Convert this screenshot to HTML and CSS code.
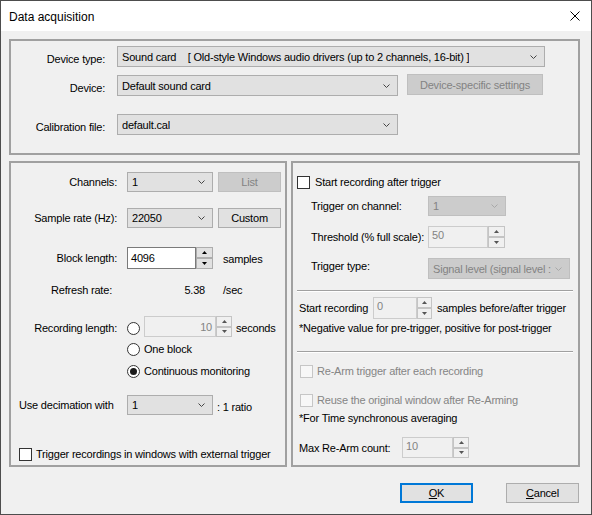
FILE: index.html
```html
<!DOCTYPE html>
<html>
<head>
<meta charset="utf-8">
<link rel="stylesheet" href="styles.css">
</head>
<body>
<div class="win">
  <div class="titlebar">
    <span class="title">Data acquisition</span>
    <svg class="close" width="10" height="10" viewBox="0 0 10 10"><path d="M0.5 0.5 L9.5 9.5 M9.5 0.5 L0.5 9.5" stroke="#000" stroke-width="1" fill="none"/></svg>
  </div>
  <div class="content">
    <div class="group top">
      <div class="trow">
        <span class="tlbl shift">Device type:</span>
        <div class="combo w428"><span class="pre">Sound card    [ Old-style Windows audio drivers (up to 2 channels, 16-bit) ]</span><svg class="chev" width="7" height="4" viewBox="0 0 7 4"><polyline points="0.5,0.5 3.5,3.5 6.5,0.5" fill="none" stroke="#444" stroke-width="1"/></svg></div>
      </div>
      <div class="trow r2">
        <span class="tlbl shift">Device:</span>
        <div class="combo w281"><span>Default sound card</span><svg class="chev" width="7" height="4" viewBox="0 0 7 4"><polyline points="0.5,0.5 3.5,3.5 6.5,0.5" fill="none" stroke="#444" stroke-width="1"/></svg></div>
        <div class="btn dis devbtn">Device-specific settings</div>
      </div>
      <div class="trow r3">
        <span class="tlbl shift">Calibration file:</span>
        <div class="combo w281"><span>default.cal</span><svg class="chev" width="7" height="4" viewBox="0 0 7 4"><polyline points="0.5,0.5 3.5,3.5 6.5,0.5" fill="none" stroke="#444" stroke-width="1"/></svg></div>
      </div>
    </div>

    <div class="lower">
      <div class="group left">
        <div class="lrow ra">
          <span class="llbl">Channels:</span>
          <div class="combo w86"><span>1</span><svg class="chev" width="7" height="4" viewBox="0 0 7 4"><polyline points="0.5,0.5 3.5,3.5 6.5,0.5" fill="none" stroke="#444" stroke-width="1"/></svg></div>
          <div class="btn dis sbtn">List</div>
        </div>
        <div class="lrow rb">
          <span class="llbl">Sample rate (Hz):</span>
          <div class="combo w86"><span>22050</span><svg class="chev" width="7" height="4" viewBox="0 0 7 4"><polyline points="0.5,0.5 3.5,3.5 6.5,0.5" fill="none" stroke="#444" stroke-width="1"/></svg></div>
          <div class="btn sbtn">Custom</div>
        </div>
        <div class="lrow rc">
          <span class="llbl">Block length:</span>
          <div class="edit w69">4096</div>
          <div class="spin w17"><div class="sb"><svg width="5" height="3" viewBox="0 0 5 3"><polygon points="0,3 2.5,0 5,3" fill="#000"/></svg></div><div class="sb"><svg width="5" height="3" viewBox="0 0 5 3"><polygon points="0,0 2.5,3 5,0" fill="#000"/></svg></div></div>
          <span class="after10 low">samples</span>
        </div>
        <div class="lrow rd">
          <span class="llbl refresh">Refresh rate:</span>
          <span class="val">5.38</span>
          <span class="after18">/sec</span>
        </div>
        <div class="lrow re">
          <span class="llbl low2">Recording length:</span>
          <span class="radio"></span>
          <div class="edit dedit w72 right">10</div>
          <div class="spin w16"><div class="sb dsb"><svg width="5" height="3" viewBox="0 0 5 3"><polygon points="0,3 2.5,0 5,3" fill="#555"/></svg></div><div class="sb dsb"><svg width="5" height="3" viewBox="0 0 5 3"><polygon points="0,0 2.5,3 5,0" fill="#555"/></svg></div></div>
          <span class="after4 low2">seconds</span>
        </div>
        <div class="lrow rf">
          <span class="indent116"></span>
          <span class="radio"></span>
          <span class="after4">One block</span>
        </div>
        <div class="lrow rg">
          <span class="indent116"></span>
          <span class="radio on"></span>
          <span class="after4">Continuous monitoring</span>
        </div>
        <div class="lrow rh">
          <span class="llbl leftlbl">Use decimation with</span>
          <div class="combo w86"><span>1</span><svg class="chev" width="7" height="4" viewBox="0 0 7 4"><polyline points="0.5,0.5 3.5,3.5 6.5,0.5" fill="none" stroke="#444" stroke-width="1"/></svg></div>
          <span class="after4 low2">: 1 ratio</span>
        </div>
        <div class="lrow ri">
          <span class="check"></span>
          <span class="after4">Trigger recordings in windows with external trigger</span>
        </div>
      </div>

      <div class="group right">
        <div class="rrow q1">
          <span class="check"></span>
          <span class="after5">Start recording after trigger</span>
        </div>
        <div class="rrow q2">
          <span class="rlbl">Trigger on channel:</span>
          <div class="combo dcombo w78"><span>1</span><svg class="chev" width="7" height="4" viewBox="0 0 7 4"><polyline points="0.5,0.5 3.5,3.5 6.5,0.5" fill="none" stroke="#a8a8a8" stroke-width="1"/></svg></div>
        </div>
        <div class="rrow q3">
          <span class="rlbl">Threshold (% full scale):</span>
          <div class="edit dedit w60 topish">50</div>
          <div class="spin w17"><div class="sb dsb"><svg width="5" height="3" viewBox="0 0 5 3"><polygon points="0,3 2.5,0 5,3" fill="#555"/></svg></div><div class="sb dsb"><svg width="5" height="3" viewBox="0 0 5 3"><polygon points="0,0 2.5,3 5,0" fill="#555"/></svg></div></div>
        </div>
        <div class="rrow q4">
          <span class="rlbl up3">Trigger type:</span>
          <div class="combo dcombo w142"><span>Signal level (signal level :</span><svg class="chev" width="7" height="4" viewBox="0 0 7 4"><polyline points="0.5,0.5 3.5,3.5 6.5,0.5" fill="none" stroke="#a8a8a8" stroke-width="1"/></svg></div>
        </div>
        <div class="sep s1"></div>
        <div class="rrow q5">
          <span class="slbl">Start recording</span>
          <div class="edit dedit w44 topish">0</div>
          <div class="spin w15"><div class="sb dsb"><svg width="5" height="3" viewBox="0 0 5 3"><polygon points="0,3 2.5,0 5,3" fill="#555"/></svg></div><div class="sb dsb"><svg width="5" height="3" viewBox="0 0 5 3"><polygon points="0,0 2.5,3 5,0" fill="#555"/></svg></div></div>
          <span class="after5">samples before/after trigger</span>
        </div>
        <div class="rrow q6">
          <span>*Negative value for pre-trigger, positive for post-trigger</span>
        </div>
        <div class="sep s2"></div>
        <div class="rrow q7">
          <span class="check dcheck"></span>
          <span class="after4 gray">Re-Arm trigger after each recording</span>
        </div>
        <div class="rrow q8">
          <span class="check dcheck"></span>
          <span class="after4 gray">Reuse the original window after Re-Arming</span>
        </div>
        <div class="rrow q9">
          <span>*For Time synchronous averaging</span>
        </div>
        <div class="rrow q10">
          <span class="mlbl">Max Re-Arm count:</span>
          <div class="edit dedit w51 topish">10</div>
          <div class="spin w16"><div class="sb dsb"><svg width="5" height="3" viewBox="0 0 5 3"><polygon points="0,3 2.5,0 5,3" fill="#555"/></svg></div><div class="sb dsb"><svg width="5" height="3" viewBox="0 0 5 3"><polygon points="0,0 2.5,3 5,0" fill="#555"/></svg></div></div>
        </div>
      </div>
    </div>

    <div class="buttons">
      <div class="btn okbtn"><span class="ul">O</span>K</div>
      <div class="btn cbtn"><span class="ul">C</span>ancel</div>
    </div>
  </div>
</div>
</body>
</html>
```
FILE: styles.css
```css
html, body { margin: 0; padding: 0; background: #f0f0f0; }
body {
  font-family: "Liberation Sans", Arial, sans-serif;
  font-size: 11px;
  letter-spacing: -0.2px;
  color: #000;
}
.win {
  width: 592px; height: 515px; box-sizing: border-box;
  border: 1px solid #4d4d4d;
  background: #f0f0f0;
  display: flex; flex-direction: column;
}
.titlebar {
  height: 30px; background: #fff;
  display: flex; align-items: center; justify-content: space-between;
  padding: 0 11px 0 8px;
  flex: none;
}
.title { font-size: 12px; letter-spacing: 0; padding-top: 1px; }
.close { display: block; }
.content { padding: 8px 11px 0 8px; display: flex; flex-direction: column; }
.group { border: 2px solid #a0a0a0; box-sizing: border-box; }
.top { height: 116px; padding-top: 5px; }
.lower { display: flex; gap: 4px; margin-top: 6px; height: 306px; }
.left { width: 278px; flex: none; }
.right { flex: 1; }

.pre { white-space: pre; }
.combo {
  display: flex; align-items: center; justify-content: space-between;
  height: 100%; box-sizing: border-box;
  border: 1px solid #adadad; background: #e1e1e1;
  padding: 0 7px 0 4px; white-space: nowrap; overflow: hidden;
  flex: none;
}
.combo span { overflow: hidden; }
.chev { display: block; flex: none; }
.dcombo { background: #cccccc; border-color: #bfbfbf; color: #838383; }
.btn {
  display: flex; align-items: center; justify-content: center;
  box-sizing: border-box; border: 1px solid #adadad; background: #e1e1e1;
  height: 100%; flex: none;
}
.btn.dis { background: #cccccc; border-color: #bfbfbf; color: #838383; }
.edit {
  height: 100%; box-sizing: border-box; border: 1px solid #7a7a7a;
  background: #fff; padding: 0 3px; display: flex; align-items: center; flex: none;
}
.dedit { background: #f0f0f0; border-color: #cccccc; color: #838383; }
.right.edit, .edit.right { justify-content: flex-end; }
.topish { align-items: flex-start; padding-top: 2px; }
.spin { display: flex; flex-direction: column; height: 100%; flex: none; }
.sb {
  flex: 1; box-sizing: border-box; border: 1px solid #adadad; background: #e1e1e1;
  display: flex; align-items: center; justify-content: center;
}
.sb svg { display: block; }
.dsb { background: #f0f0f0; border-color: #c4c4c4; }
.radio {
  width: 13px; height: 13px; box-sizing: border-box; border-radius: 50%;
  border: 1px solid #333; background: #fff; flex: none; position: relative;
}
.radio.on::after {
  content: ""; position: absolute; left: 2px; top: 2px; width: 7px; height: 7px;
  border-radius: 50%; background: #1a1a1a;
}
.check {
  width: 13px; height: 13px; box-sizing: border-box; border: 1px solid #333;
  background: #fff; flex: none;
}
.dcheck { border-color: #c6c6c6; background: #f7f7f7; }
.gray { color: #858585; }

.w428 { width: 428px; } .w281 { width: 281px; } .w86 { width: 86px; }
.w78 { width: 78px; } .w142 { width: 142px; }
.w69 { width: 69px; } .w72 { width: 72px; } .w60 { width: 60px; }
.w44 { width: 44px; } .w51 { width: 51px; }
.w17 { width: 17px; } .w16 { width: 16px; } .w15 { width: 15px; }

.after4 { margin-left: 4px; } .after5 { margin-left: 5px; }
.after10 { margin-left: 10px; } .after18 { margin-left: 18px; }
.low { padding-top: 2px; } .low2 { padding-top: 3px; }

/* top group */
.trow { display: flex; align-items: center; height: 21px; }
.trow.r2 { margin-top: 8px; }
.trow.r3 { margin-top: 18px; }
.tlbl { width: 94px; margin-right: 12px; text-align: right; flex: none; }
.shift { padding-top: 5px; }
.devbtn { width: 136px; margin-left: 9px; height: 21px; margin-bottom: 2px; }

/* lower left */
.lrow { display: flex; align-items: center; }
.llbl { width: 106px; margin-right: 10px; text-align: right; flex: none; }
.leftlbl { text-align: left; width: 98px; padding-left: 8px; }
.refresh { width: 101px; margin-right: 15px; }
.indent116 { width: 116px; flex: none; }
.val { width: 78px; text-align: right; flex: none; }
.sbtn { width: 63px; margin-left: 5px; }
.ra { margin-top: 9px; height: 20px; }
.rb { margin-top: 16px; height: 20px; }
.rc { margin-top: 19px; height: 22px; }
.rd { margin-top: 13px; height: 16px; }
.re { margin-top: 18px; height: 21px; }
.re .radio { margin-right: 4px; margin-top: 3px; }
.rf { margin-top: 4px; height: 16px; }
.rg { margin-top: 6px; height: 16px; }
.rh { margin-top: 16px; height: 20px; }
.ri { margin-top: 31px; height: 16px; padding-left: 8px; }

/* lower right */
.rrow { display: flex; align-items: center; }
.rlbl { width: 117px; padding-left: 18px; flex: none; }
.up3 { margin-bottom: 5px; }
.slbl { width: 74px; flex: none; }
.mlbl { width: 103px; flex: none; }
.q1 { margin-top: 11px; height: 16px; padding-left: 4px; }
.q2 { margin-top: 6px; height: 20px; }
.q3 { margin-top: 10px; height: 22px; }
.q4 { margin-top: 10px; height: 21px; }
.sep { height: 0; border-top: 1px solid #a0a0a0; border-bottom: 1px solid #fff; margin-left: 4px; width: 276px; }
.s1 { margin-top: 11px; }
.s2 { margin-top: 16px; }
.q5 { margin-top: 5px; height: 22px; padding-left: 6px; }
.q6 { margin-top: 2px; height: 14px; padding-left: 6px; }
.q7 { margin-top: 10px; height: 16px; padding-left: 7px; }
.q8 { margin-top: 13px; height: 16px; padding-left: 7px; }
.q9 { margin-top: 3px; height: 14px; padding-left: 6px; }
.q10 { margin-top: 12px; height: 21px; padding-left: 6px; }

/* bottom buttons */
.buttons { display: flex; justify-content: flex-end; gap: 33px; margin-top: 16px; height: 20px; padding-right: 1px; }
.okbtn { width: 73px; border: 2px solid #0078d7; }
.cbtn { width: 73px; }
.ul { text-decoration: underline; }
```
